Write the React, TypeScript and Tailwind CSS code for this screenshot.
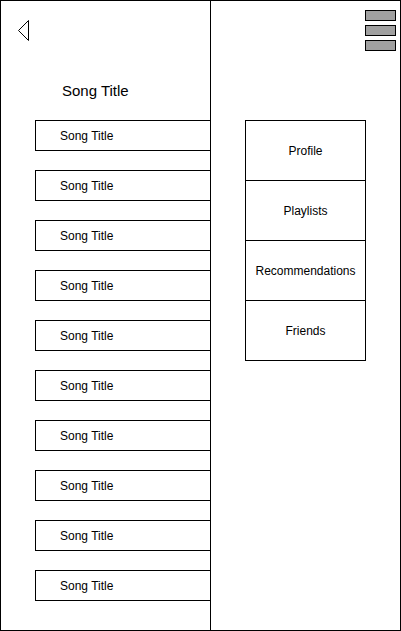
const songs = Array.from({ length: 10 }, () => 'Song Title');
const menuItems = ['Profile', 'Playlists', 'Recommendations', 'Friends'];

const BackArrow = () => (
  <svg width="11" height="21" viewBox="0 0 11 21" fill="none">
    <path d="M10.5 0.5 L0.5 10.5 L10.5 20.5 Z" stroke="#000" strokeWidth="1" />
  </svg>
);

const App = () => {
  return (
    <div
      className="w-[401px] h-[631px] border border-black bg-white flex text-black"
      style={{ fontFamily: '"Liberation Sans", Arial, sans-serif' }}
    >
      {/* 왼쪽: 곡 목록 */}
      <div className="w-[210px] h-full border-r border-black flex flex-col">
        <div className="ml-[17px] mt-[19px] h-[21px]">
          <BackArrow />
        </div>
        <div className="mt-[40px] h-[20px] leading-[20px] pl-[61px] text-[15px]">
          Song Title
        </div>
        <div className="mt-[19px] ml-[34px] flex flex-col gap-[19px]">
          {songs.map((title, i) => (
            <div
              key={i}
              className="h-[31px] border-y border-l border-black pl-[24px] flex items-center text-[12px]"
            >
              {title}
            </div>
          ))}
        </div>
      </div>

      {/* 오른쪽: 메뉴 */}
      <div className="flex-1 flex flex-col">
        <div className="flex flex-col items-end gap-[4px] pt-[9px] pr-[4px]">
          <div className="w-[31px] h-[11px] border border-black bg-[#a0a0a0]" />
          <div className="w-[31px] h-[11px] border border-black bg-[#a0a0a0]" />
          <div className="w-[31px] h-[11px] border border-black bg-[#a0a0a0]" />
        </div>
        <div className="mt-[69px] ml-[34px] w-[121px] border border-black flex flex-col">
          {menuItems.map((item, i) => (
            <div
              key={item}
              className={`flex items-center justify-center text-[12px] ${
                i < menuItems.length - 1 ? 'h-[60px] border-b border-black' : 'h-[59px]'
              }`}
            >
              {item}
            </div>
          ))}
        </div>
      </div>
    </div>
  );
};

export default App;
